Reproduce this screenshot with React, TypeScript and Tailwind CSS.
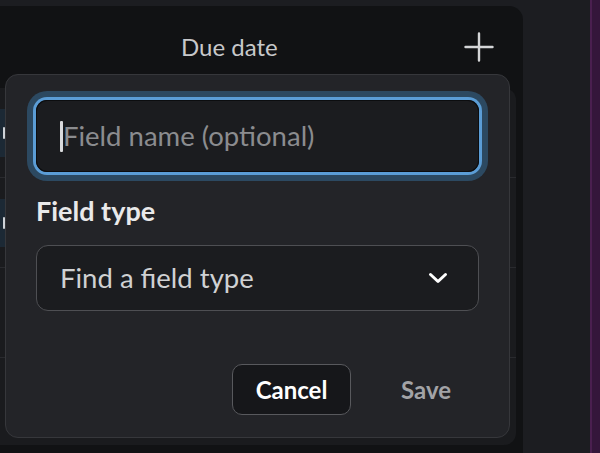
import { ReactNode } from 'react';

function TableRow({ marker, children }: { marker?: boolean; children?: ReactNode }) {
  return (
    <div className="h-[90px] border-b border-[#292a2e] flex items-center">
      {marker && (
        <div className="w-[5px] h-[48px] bg-[#1c2935] flex items-center justify-end">
          <div className="w-[2px] h-[12px] bg-[#cfd3d8] rounded-full" />
        </div>
      )}
      {children}
    </div>
  );
}

function PlusIcon() {
  return (
    <svg width="30" height="30" viewBox="0 0 30 30" fill="none">
      <path d="M15 1.5v27M1.5 15h27" stroke="#d4d5d7" strokeWidth="2.4" strokeLinecap="round" />
    </svg>
  );
}

function Chevron() {
  return (
    <svg width="20" height="12" viewBox="0 0 20 12" fill="none">
      <path d="M2.5 2.5 10 9.5l7.5-7" stroke="#ffffff" strokeWidth="3" strokeLinecap="round" strokeLinejoin="round" />
    </svg>
  );
}

export default function App() {
  return (
    <div className="w-[600px] h-[453px] overflow-hidden flex bg-[#1c1d21] font-['Lato','Noto_Sans',sans-serif]">
      <div className="relative w-[523px] mt-[6px] h-[447px] bg-[#111214] rounded-tr-[14px]">
        {/* column header */}
        <div className="h-[82px] flex items-center pl-[181px] pr-[29px]">
          <span className="text-[24px] text-[#c7c8ca] leading-none">Due date</span>
          <div className="ml-auto">
            <PlusIcon />
          </div>
        </div>

        {/* table body behind the popover */}
        <div className="w-[516px] h-[357px] bg-[#1a1b1e] rounded-r-[12px] overflow-hidden">
          <TableRow marker />
          <TableRow marker />
          <TableRow />
          <div className="h-[87px]" />
        </div>

        {/* popover */}
        <div className="absolute left-[5px] top-[68px] w-[505px] h-[364px] bg-[#232428] border border-[#36373b] rounded-[13px] px-[30px] pt-[25px] pb-[22px] flex flex-col">
          <div className="h-[72px] rounded-[11px] bg-[#1b1c1f] shadow-[inset_0_0_0_1px_#0c0d0f,0_0_0_3px_#5b9dd6,0_0_0_9px_#2c4961] flex items-center pl-[24px]">
            <span className="w-[3px] h-[31px] bg-[#d9dadc] rounded-[1px]" />
            <span className="text-[27.5px] text-[#8b8c8f] leading-none">Field name (optional)</span>
          </div>

          <div className="mt-[24px] text-[27px] font-bold text-[#e9e9ea] leading-[30px]">Field type</div>

          <div className="mt-[19px] h-[66px] rounded-[12px] bg-[#1b1c1f] border border-[#4e4f53] flex items-center pl-[23px] pr-[30px]">
            <span className="text-[27.5px] text-[#d0d1d3] leading-none">Find a field type</span>
            <div className="ml-auto">
              <Chevron />
            </div>
          </div>

          <div className="mt-auto flex justify-end gap-[22px]">
            <button className="w-[119px] h-[51px] rounded-[10px] bg-[#16171a] border border-[#58595d] text-[24px] font-bold text-white leading-none">
              Cancel
            </button>
            <button className="w-[106px] h-[51px] rounded-[10px] text-[24px] font-bold text-[#a2a3a6] leading-none">
              Save
            </button>
          </div>
        </div>
      </div>

      <div className="flex-1" />
      <div className="w-[10px] h-full flex">
        <div className="w-[2px] bg-[#4a1f4f]" />
        <div className="flex-1 bg-[#34163a]" />
      </div>
    </div>
  );
}
